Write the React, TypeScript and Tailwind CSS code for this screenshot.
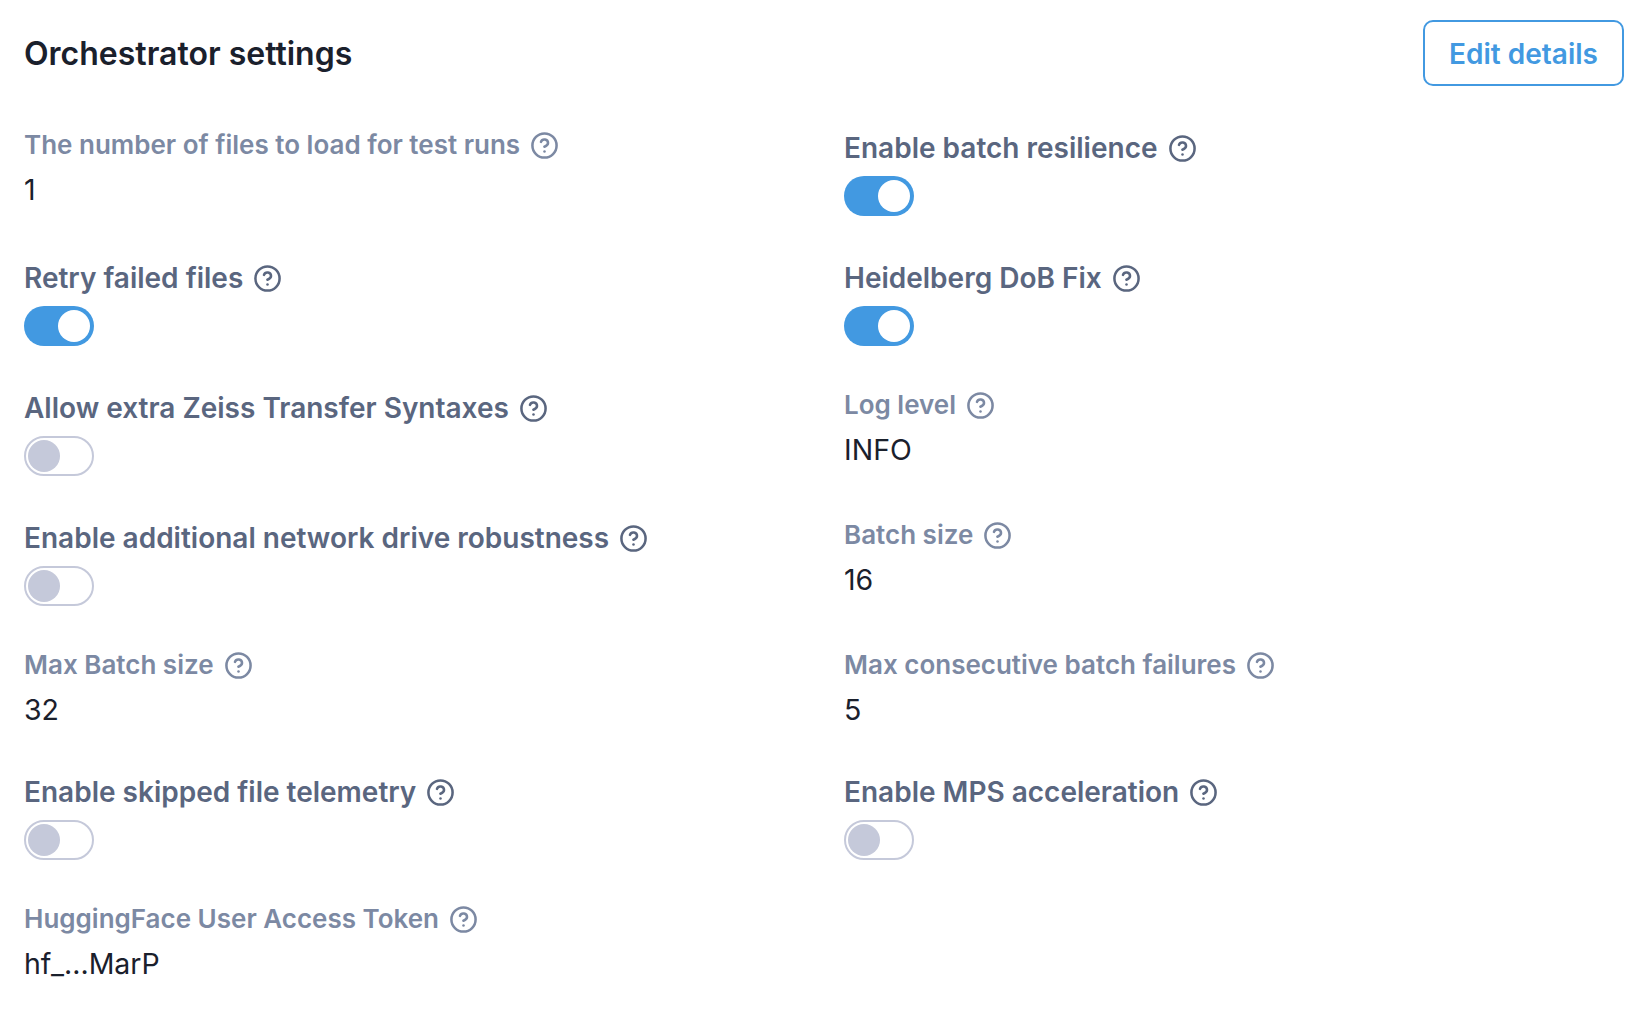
import { CircleHelp } from "lucide-react";

type Item =
  | { kind: "toggle"; label: string; on: boolean }
  | { kind: "text"; label: string; value: string };

const items: Item[] = [
  { kind: "text", label: "The number of files to load for test runs", value: "1" },
  { kind: "toggle", label: "Enable batch resilience", on: true },
  { kind: "toggle", label: "Retry failed files", on: true },
  { kind: "toggle", label: "Heidelberg DoB Fix", on: true },
  { kind: "toggle", label: "Allow extra Zeiss Transfer Syntaxes", on: false },
  { kind: "text", label: "Log level", value: "INFO" },
  { kind: "toggle", label: "Enable additional network drive robustness", on: false },
  { kind: "text", label: "Batch size", value: "16" },
  { kind: "text", label: "Max Batch size", value: "32" },
  { kind: "text", label: "Max consecutive batch failures", value: "5" },
  { kind: "toggle", label: "Enable skipped file telemetry", on: false },
  { kind: "toggle", label: "Enable MPS acceleration", on: false },
  { kind: "text", label: "HuggingFace User Access Token", value: "hf_...MarP" },
];

function Toggle({ on }: { on: boolean }) {
  return (
    <div
      className={
        on
          ? "mt-2 flex h-10 w-[70px] items-center justify-end rounded-full bg-[#4299e1] p-1"
          : "mt-2 flex h-10 w-[70px] items-center justify-start rounded-full border-2 border-[#c5c9da] bg-white p-0.5"
      }
    >
      <div className={on ? "h-8 w-8 rounded-full bg-white" : "h-8 w-8 rounded-full bg-[#c5c9da]"} />
    </div>
  );
}

function Field({ item }: { item: Item }) {
  if (item.kind === "toggle") {
    return (
      <div className="pb-[42px]">
        <div className="flex h-10 items-center gap-[10px] text-[28px] leading-10 font-semibold text-[#5a667f]">
          <span>{item.label}</span>
          <CircleHelp className="h-[29px] w-[29px] shrink-0" strokeWidth={2.1} />
        </div>
        <Toggle on={item.on} />
      </div>
    );
  }
  return (
    <div className="pb-[42px]">
      <div className="flex h-[34px] items-center gap-[10px] text-[26px] leading-[34px] font-semibold text-[#7c89a3]">
        <span>{item.label}</span>
        <CircleHelp className="h-[29px] w-[29px] shrink-0" strokeWidth={2.1} />
      </div>
      <div className="mt-2 h-10 text-[28.5px] leading-10 font-normal text-[#1a202c]">{item.value}</div>
    </div>
  );
}

export default function App() {
  return (
    <div className="min-h-[1014px] bg-white pt-5 pr-4 pl-6 font-['Inter',sans-serif]">
      <div className="flex h-[108px] items-start justify-between">
        <h1 className="text-[32px] leading-[68px] font-semibold text-[#1a202c]">Orchestrator settings</h1>
        <button className="h-[66px] w-[201px] rounded-[10px] border-2 border-[#4299e1] bg-white pt-0.5 text-[28px] font-semibold text-[#4299e1]">
          Edit details
        </button>
      </div>
      <div className="grid grid-cols-[820px_1fr]">
        {items.map((item) => (
          <Field key={item.label} item={item} />
        ))}
      </div>
    </div>
  );
}
